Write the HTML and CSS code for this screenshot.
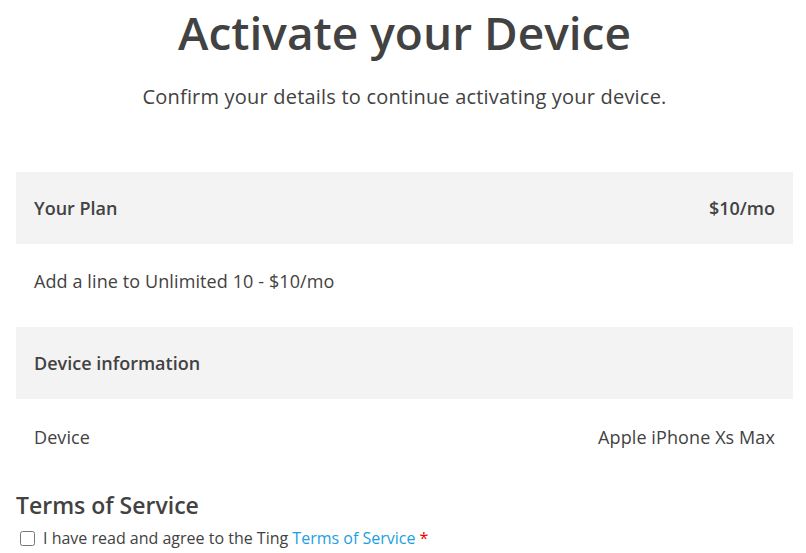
FILE: index.html
```html
<!DOCTYPE html>
<html>
<head>
<meta charset="utf-8">
<link rel="stylesheet" href="styles.css">
</head>
<body>
<main class="page">
  <header class="intro">
    <h1 class="title">Activate your Device</h1>
    <p class="subtitle">Confirm your details to continue activating your device.</p>
  </header>
  <section class="panel">
    <div class="panel-head">
      <span>Your Plan</span>
      <span>$10/mo</span>
    </div>
    <div class="panel-row panel-row-plan">
      <span>Add a line to Unlimited 10 - $10/mo</span>
    </div>
  </section>
  <section class="panel">
    <div class="panel-head">
      <span>Device information</span>
    </div>
    <div class="panel-row panel-row-device">
      <span>Device</span>
      <span>Apple iPhone Xs Max</span>
    </div>
  </section>
  <section class="terms">
    <h2 class="terms-title">Terms of Service</h2>
    <label class="agree">
      <input type="checkbox" class="check">
      <span>I have read and agree to the Ting <a class="link" href="#">Terms of Service</a> <span class="req">*</span></span>
    </label>
  </section>
</main>
</body>
</html>
```
FILE: styles.css
```css
html, body {
  margin: 0;
  padding: 0;
  background: #fff;
}
body {
  font-family: "Open Sans", "Lato", sans-serif;
  color: #424242;
}
.page {
  padding: 0 13px 0 16px;
}
.intro {
  text-align: center;
  padding-top: 2px;
}
.title {
  margin: 0;
  font-size: 46px;
  font-weight: 600;
  line-height: 60px;
}
.subtitle {
  margin: 22px 0 0;
  font-size: 20px;
  line-height: 26px;
  letter-spacing: 0.2px;
}
.panel {
  display: flex;
  flex-direction: column;
}
.panel:first-of-type {
  margin-top: 62px;
}
.panel-head {
  background: #f3f3f3;
  height: 72px;
  display: flex;
  align-items: center;
  justify-content: space-between;
  padding: 0 18px;
  font-size: 18px;
  font-weight: 600;
}
.panel-row {
  display: flex;
  align-items: center;
  justify-content: space-between;
  padding: 0 18px;
  font-size: 18px;
  letter-spacing: 0.1px;
  box-sizing: border-box;
}
.panel-row-plan {
  height: 83px;
  padding-bottom: 9px;
}
.panel-row-device {
  height: 76px;
}
.terms {
  margin-top: 15px;
}
.terms-title {
  margin: 0;
  font-size: 23px;
  font-weight: 600;
  line-height: 30px;
}
.agree {
  display: flex;
  align-items: center;
  gap: 8px;
  margin-top: 7px;
  font-size: 16px;
}
.check {
  width: 15px;
  height: 15px;
  margin: 0 0 0 4px;
}
.link {
  color: #1ba0e1;
  text-decoration: none;
}
.req {
  color: #e00;
}
```
